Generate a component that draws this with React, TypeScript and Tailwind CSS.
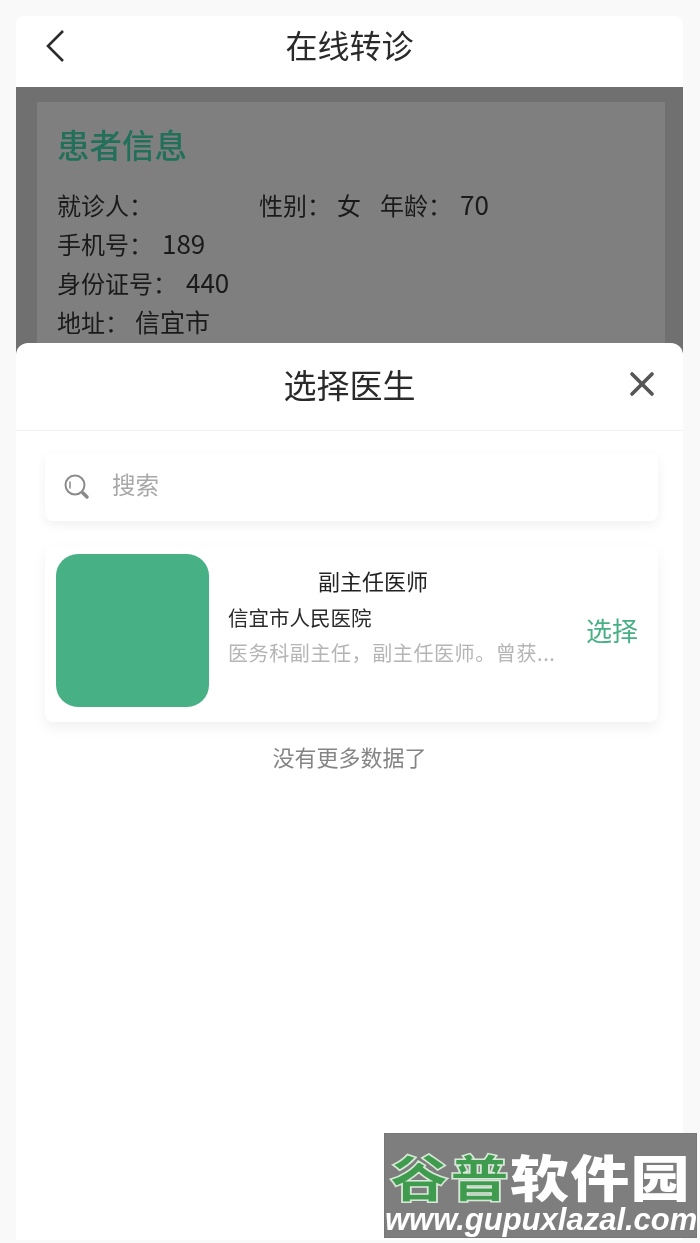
import { X } from "lucide-react"

const cjk = "font-['Noto_Sans_CJK_SC','Noto_Sans',sans-serif]"

function PatientInfo() {
  return (
    <div className="h-[270px] shrink-0 overflow-hidden bg-[#6f706f] pl-[21px] pr-[18px] pt-[15px]">
      <div className="h-[300px] bg-[#7f7f7f] pl-[20px] pr-[20px] pt-[20px] text-[24px] leading-[34px] text-[#1a1a1a]">
        <h2 className="text-[32.5px] font-medium leading-[44px] text-[#22705a]">患者信息</h2>
        <div className="mt-[22px] flex h-[34px]">
          <span className="w-[202px]">就诊人：</span>
          <span className="w-[121px]">性别：<span className="ml-[6px]">女</span></span>
          <span>年龄：<span className="ml-[8px] text-[26px] leading-none">70</span></span>
        </div>
        <div className="mt-[5px] h-[34px]">手机号：<span className="ml-[9px] text-[26px] leading-none">189</span></div>
        <div className="mt-[5px] h-[34px]">身份证号：<span className="ml-[9px] text-[26px] leading-none">440</span></div>
        <div className="mt-[5px] h-[34px]">地址：<span className="ml-[6px] text-[25px] leading-none">信宜市</span></div>
      </div>
    </div>
  )
}

function DoctorCard() {
  return (
    <div className="ml-[29px] mr-[25px] mt-[25px] flex h-[176px] items-start rounded-[8px] bg-white pl-[11px] pr-[20px] pt-[8px] shadow-[0_6px_14px_rgba(0,0,0,0.06)]">
      <div className="h-[153px] w-[153px] shrink-0 rounded-[22px] bg-[#47b084]" />
      <div className="ml-[19px] w-[328px] pt-[11px]">
        <div className="pl-[90px] text-[22px] leading-[30px] text-[#222222]">副主任医师</div>
        <div className="mt-[7px] text-[20.5px] leading-[30px] text-[#2b2b2b]">信宜市人民医院</div>
        <div className="mt-[6px] truncate text-[20px] leading-[30px] tracking-[0.6px] text-[#b5b5b5]">医务科副主任，副主任医师。曾获...</div>
      </div>
      <span className="ml-auto mt-[58px] text-[26px] leading-[36px] text-[#47b084]">选择</span>
    </div>
  )
}

function DoctorSheet() {
  return (
    <div className="relative -mt-[14px] flex-1 rounded-t-[12px] bg-white">
      <div className="relative flex h-[88px] items-center justify-center border-b border-[#f3f3f3]">
        <h2 className="-mt-[4px] text-[33px] text-[#2a2a2a]">选择医生</h2>
        <X className="absolute right-[21px] top-[21px] h-[40px] w-[40px] text-[#555555]" strokeWidth={2.2} />
      </div>
      <div className="ml-[29px] mr-[25px] mt-[22px] flex h-[68px] items-center rounded-[8px] bg-white pl-[18px] shadow-[0_4px_12px_rgba(0,0,0,0.06)]">
        <svg viewBox="0 0 28 28" className="h-[28px] w-[28px] text-[#8a8a8a]" fill="none" stroke="currentColor">
          <circle cx="12" cy="12" r="9.5" strokeWidth="2" />
          <path d="M7 9v6" strokeWidth="1.5" strokeLinecap="round" />
          <path d="M20 20l4 4" strokeWidth="3.5" strokeLinecap="round" />
        </svg>
        <span className="-mt-[4px] ml-[21px] text-[23.5px] text-[#a8a8a8]">搜索</span>
      </div>
      <DoctorCard />
      <p className="mt-[17px] text-center text-[22px] leading-[34px] text-[#858585]">没有更多数据了</p>
    </div>
  )
}

export default function App() {
  return (
    <div className={`relative flex h-[1243px] w-[700px] overflow-hidden bg-[#f9f9f9] pb-[3px] pl-[16px] pr-[17px] pt-[16px] blur-[0.5px] ${cjk}`}>
      <div className="flex w-full flex-col rounded-t-[8px] bg-white">
        <header className="relative flex h-[71px] shrink-0 items-center justify-center">
          <svg viewBox="0 0 20 34" className="absolute left-[29px] top-[13px] h-[34px] w-[20px] text-[#2c2c2c]" fill="none" stroke="currentColor" strokeWidth="2.6">
            <path d="M18 2L3 17l15 15" />
          </svg>
          <h1 className="-mt-[16px] text-[32px] text-[#2a2a2a]">在线转诊</h1>
        </header>
        <PatientInfo />
        <DoctorSheet />
      </div>

      {/* site watermark */}
      <div className="absolute left-[384px] top-[1133px] h-[105px] w-[313px] border border-[#777777] bg-[#7e7e7e]">
        <div className="flex h-[68px] origin-left scale-x-[1.18] items-center pl-[4px] pt-[14px] text-[50px] font-black leading-[54px] tracking-[1px]">
          <span className="text-[#3f9c4f] [-webkit-text-stroke:1.5px_#d8e8d8]">谷普</span>
          <span className="text-white">软件园</span>
        </div>
        <div className="whitespace-nowrap font-['Liberation_Sans',sans-serif] text-[31px] font-bold italic leading-[36px] text-white">
          www.gupuxlazal.com
        </div>
      </div>
    </div>
  )
}
